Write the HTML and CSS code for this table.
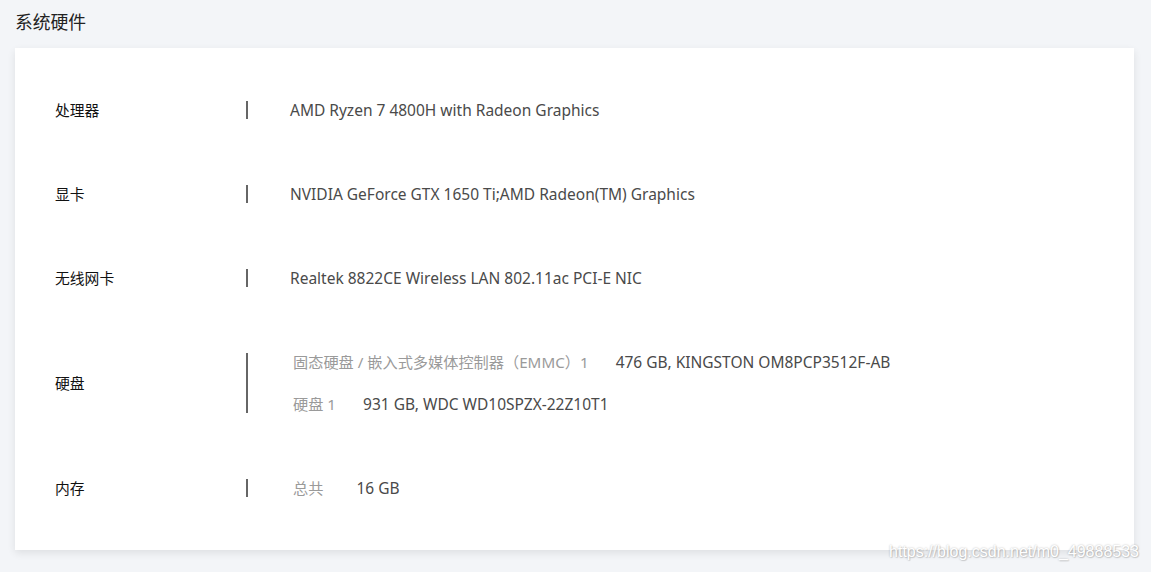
FILE: index.html
```html
<!DOCTYPE html>
<html lang="zh-CN">
<head>
<meta charset="utf-8">
<title>系统硬件</title>
<link rel="stylesheet" href="styles.css">
</head>
<body>
<div class="page">
  <h1 class="title">系统硬件</h1>
  <div class="card">
    <div class="row">
      <div class="label">处理器</div>
      <div class="sep"></div>
      <div class="value">AMD Ryzen 7 4800H with Radeon Graphics</div>
    </div>
    <div class="row">
      <div class="label">显卡</div>
      <div class="sep"></div>
      <div class="value">NVIDIA GeForce GTX 1650 Ti;AMD Radeon(TM) Graphics</div>
    </div>
    <div class="row">
      <div class="label">无线网卡</div>
      <div class="sep"></div>
      <div class="value">Realtek 8822CE Wireless LAN 802.11ac PCI-E NIC</div>
    </div>
    <div class="row">
      <div class="label">硬盘</div>
      <div class="sep"></div>
      <div class="value multi">
        <div class="line"><span class="sub">固态硬盘 / 嵌入式多媒体控制器（EMMC）1</span><span class="subval">476 GB, KINGSTON OM8PCP3512F-AB</span></div>
        <div class="line"><span class="sub">硬盘 1</span><span class="subval">931 GB, WDC WD10SPZX-22Z10T1</span></div>
      </div>
    </div>
    <div class="row">
      <div class="label">内存</div>
      <div class="sep"></div>
      <div class="value"><span class="sub wide">总共</span><span class="subval">16 GB</span></div>
    </div>
  </div>
  <div class="watermark">https://blog.csdn.net/m0_49888533</div>
</div>
</body>
</html>
```

FILE: styles.css
```css
html, body {
  margin: 0;
  padding: 0;
  background: #f3f5f8;
}
body {
  font-family: "Noto Sans", "Noto Sans CJK SC", sans-serif;
  color: #333;
  width: 1151px;
  height: 572px;
  overflow: hidden;
}
.page {
  position: relative;
  height: 572px;
  padding: 10px 17px 0 15px;
  box-sizing: border-box;
}
.title {
  margin: 0;
  font-size: 17.8px;
  font-weight: normal;
  line-height: 24px;
  color: #222;
}
.card {
  margin-top: 14px;
  background: #fff;
  padding: 20px 0;
  box-shadow: 0 3px 8px rgba(0, 0, 0, 0.09);
}
.row {
  display: flex;
  align-items: stretch;
  padding: 33px 0;
}
.label {
  width: 191px;
  padding-left: 40px;
  font-size: 14.8px;
  line-height: 18px;
  color: #111;
  display: flex;
  align-items: center;
}
.sep {
  width: 2px;
  background: #666;
  min-height: 18px;
}
.value {
  padding-left: 42px;
  font-size: 15.5px;
  line-height: 18px;
  color: #4a4a4a;
  display: flex;
  align-items: center;
}
.value.multi {
  flex-direction: column;
  align-items: flex-start;
  gap: 24px;
}
.line {
  display: flex;
}
.sub {
  color: #9a9a9a;
  font-size: 15.2px;
  margin-left: 3px;
  margin-right: 27px;
}
.sub.wide {
  margin-right: 33px;
}
.subval {
  color: #4a4a4a;
}
.watermark {
  position: absolute;
  right: 12px;
  top: 543px;
  font-family: "Liberation Sans", Arial, sans-serif;
  font-size: 16px;
  color: #fff;
  text-shadow: 0 0 2px rgba(0,0,0,0.3), 1px 1px 1px rgba(0,0,0,0.12);
}
```
